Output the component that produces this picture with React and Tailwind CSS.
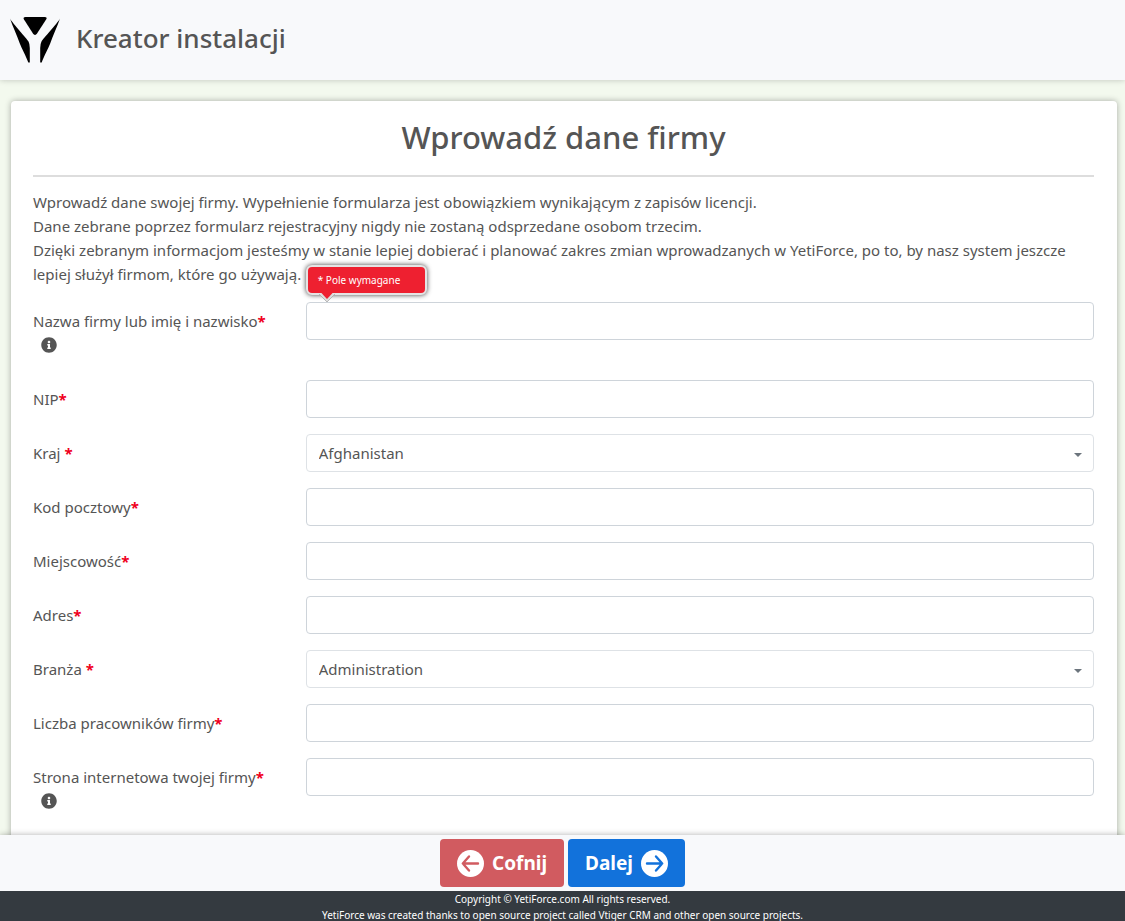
import { FaInfoCircle } from "react-icons/fa";

const fields = [
  { id: "company", label: "Nazwa firmy lub imię i nazwisko", info: true, error: "* Pole wymagane" },
  { id: "vat", label: "NIP" },
  { id: "country", label: "Kraj ", options: ["Afghanistan"] },
  { id: "postcode", label: "Kod pocztowy" },
  { id: "city", label: "Miejscowość" },
  { id: "address", label: "Adres" },
  { id: "industry", label: "Branża ", options: ["Administration"] },
  { id: "employees", label: "Liczba pracowników firmy" },
  { id: "website", label: "Strona internetowa twojej firmy", info: true },
];

function Logo() {
  return (
    <svg viewBox="0 0 50 48" className="h-12 w-[50px]" aria-hidden="true">
      <path d="M15.500 1h19.200q3 0 1.400 2.600L27.200 17.300q-2.200 3.200-4.400 0L14 3.600q-1.400-2.600 1.500-2.600z" />
      <path d="M0 2.500C3 8 16.500 22 18.500 25.500Q19.800 28 19.800 32V46.500H18.300C16 40 11.500 32 9.800 27.500 7 19 2.500 10.500 0 2.500z" />
      <path d="M50 2.500C47 8 33.500 22 31.500 25.500Q30.200 28 30.200 32V46.500H31.700C34 40 38.500 32 40.200 27.500 43 19 47.500 10.500 50 2.500z" />
    </svg>
  );
}

function ArrowCircle({ direction, className }) {
  return (
    <svg viewBox="0 0 27 27" className={"size-[27px] " + className} fill="none" aria-hidden="true">
      <circle cx="13.5" cy="13.5" r="13.5" fill="white" />
      <path
        d={direction === "left" ? "M12 6.500L5.800 13.500L12 20.500M6 13.500H21" : "M15 6.500L21.200 13.500L15 20.500M21 13.500H6"}
        stroke="currentColor"
        strokeWidth="2.4"
        strokeLinecap="round"
        strokeLinejoin="round"
      />
    </svg>
  );
}

function ErrorBubble({ id, children }) {
  return (
    <div id={id} role="alert" className="absolute bottom-full left-[15px] mb-[7px] w-[121px] rounded-md border-2 border-[#e4e4e4] bg-[#ee2030] px-2.5 py-1 text-[10px] leading-[18px] text-white shadow-[0_0_5px_#000000c0]">
      {children}
      <svg viewBox="0 0 16 10" className="absolute top-full left-[11px] h-2.5 w-4" aria-hidden="true">
        <path d="M0 1L8 9L16 1" fill="#ddd" stroke="#aaa" strokeWidth="0.8" />
        <path d="M1.500 -1H14.500L8 6z" fill="#ee2030" />
      </svg>
    </div>
  );
}

function Field({ field }) {
  const box = "block h-[38px] w-full rounded border border-[#ced4da] bg-white px-3 text-[#555]";
  const errorId = field.error ? field.id + "-error" : undefined;
  return (
    <div className="-mx-[15px] mb-4 flex">
      <label htmlFor={field.id} className="w-1/4 px-[15px] py-[7px]">
        {field.label}
        <span className="font-bold text-[#f0001c]">*</span>
        {field.info && (
          <span className="flex h-6 items-center pl-2">
            <FaInfoCircle className="size-4" />
          </span>
        )}
      </label>
      <div className="relative w-3/4 px-[15px]">
        {field.options ? (
          <div className="relative">
            <select id={field.id} className={box + " appearance-none border-[#dee2e6]"}>
              {field.options.map((o) => (
                <option key={o}>{o}</option>
              ))}
            </select>
            <svg viewBox="0 0 8 4" className="pointer-events-none absolute top-[19px] right-3 h-1 w-2" aria-hidden="true">
              <path d="M0 0H8L4 4z" fill="#6c757d" />
            </svg>
          </div>
        ) : (
          <input id={field.id} type="text" aria-describedby={errorId} className={box} />
        )}
        {field.error && (
          <div className="absolute top-0 left-0">
            <ErrorBubble id={errorId}>{field.error}</ErrorBubble>
          </div>
        )}
      </div>
    </div>
  );
}

export default function App() {
  return (
    <div className="flex h-screen flex-col bg-[#f3f9ee] font-['Noto_Sans','Open_Sans',sans-serif] text-[15px] leading-6 text-[#555]">
      <header className="z-10 flex h-20 shrink-0 items-center gap-4 bg-[#f8f9fb] px-2.5 shadow-[0_0_6px_#00000038]">
        <Logo />
        <span className="pb-1 text-[26px] leading-9 font-medium">Kreator instalacji</span>
      </header>
      <main className="min-h-0 flex-1 overflow-hidden pt-[21px] pr-2 pl-[11px]">
        <form className="rounded-sm bg-white pt-4 pr-[23px] pb-6 pl-[22px] shadow-[0_0_6px_#00000050]">
          <h1 className="border-b-2 border-[#ddd] pb-[18px] text-center text-[31px] leading-10 font-medium">Wprowadź dane firmy</h1>
          <p className="mt-[13px] mb-4">
            Wprowadź dane swojej firmy. Wypełnienie formularza jest obowiązkiem wynikającym z zapisów licencji.
            <br />
            Dane zebrane poprzez formularz rejestracyjny nigdy nie zostaną odsprzedane osobom trzecim.
            <br />
            Dzięki zebranym informacjom jesteśmy w stanie lepiej dobierać i planować zakres zmian wprowadzanych w YetiForce, po to, by nasz system jeszcze lepiej służył firmom, które go używają.
          </p>
          {fields.map((f) => (
            <Field key={f.id} field={f} />
          ))}
        </form>
      </main>
      <div className="z-10 flex shrink-0 justify-center gap-1 bg-[#f8f9fb] py-1 shadow-[0_0_6px_#00000050]">
        <button type="button" className="flex h-12 items-center gap-2 rounded bg-[#d15b60] px-[17px] text-[19px] font-bold text-white">
          <ArrowCircle direction="left" className="text-[#d15b60]" />
          Cofnij
        </button>
        <button type="button" className="flex h-12 items-center gap-2 rounded bg-[#1272db] px-[17px] text-[19px] font-bold text-white">
          Dalej
          <ArrowCircle direction="right" className="text-[#1272db]" />
        </button>
      </div>
      <footer className="z-10 h-[30px] shrink-0 overflow-hidden bg-[#343a40] text-center text-[10px] leading-4 text-white">
        <p>Copyright © YetiForce.com All rights reserved.</p>
        <p>YetiForce was created thanks to open source project called Vtiger CRM and other open source projects.</p>
      </footer>
    </div>
  );
}
